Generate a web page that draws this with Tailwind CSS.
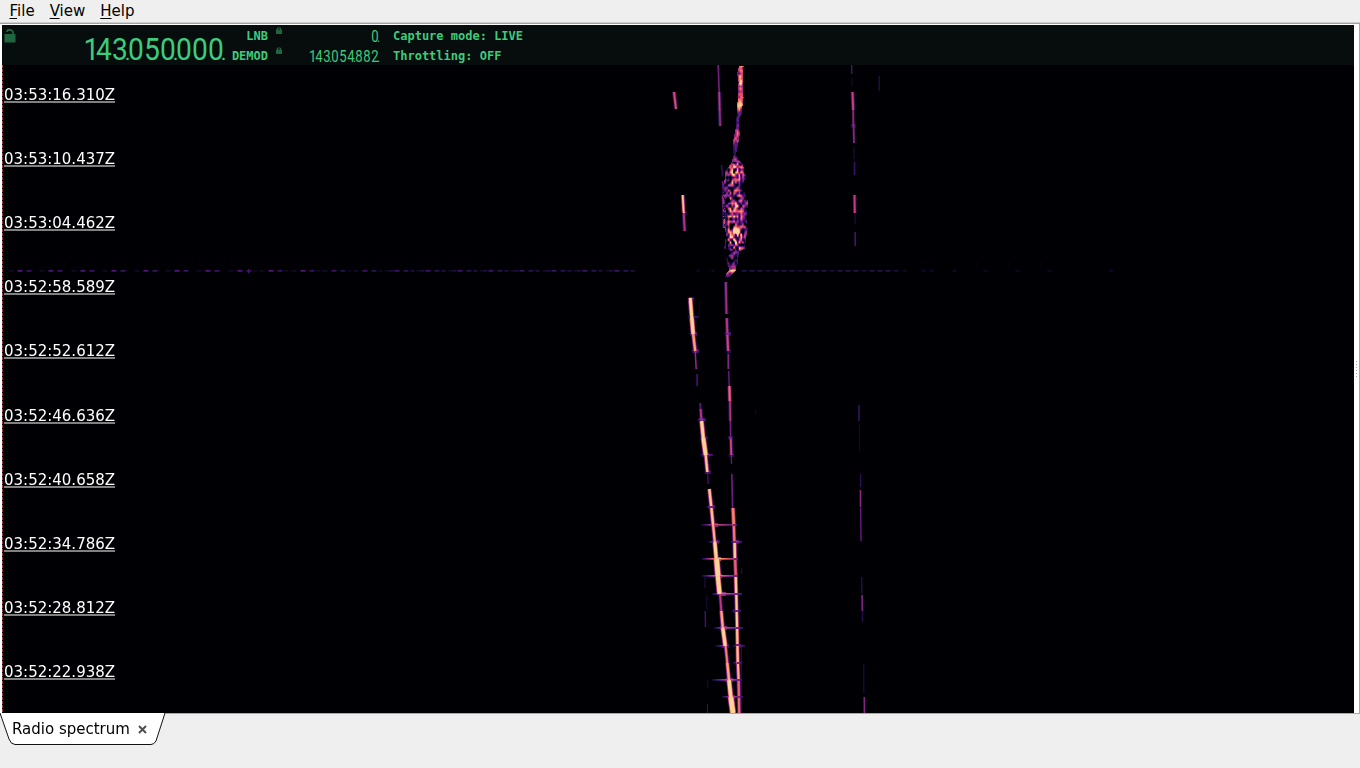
<!DOCTYPE html>
<html lang="en">
<head>
  <meta charset="UTF-8" />
  <meta name="viewport" content="width=device-width, initial-scale=1.0" />
  <title>Radio spectrum</title>
  <script src="https://cdn.jsdelivr.net/npm/@tailwindcss/browser@4"></script>
</head>
<body class="bg-[#efefef] text-black font-['DejaVu_Sans',sans-serif] h-screen overflow-hidden flex flex-col">

  <!-- Menu bar -->
  <nav class="h-[22px] shrink-0 flex items-center gap-[15px] pl-[9.500px] text-[15px] leading-[22px]">
    <a href="#"><span class="underline underline-offset-2">F</span>ile</a>
    <a href="#"><span class="underline underline-offset-2">V</span>iew</a>
    <a href="#"><span class="underline underline-offset-2">H</span>elp</a>
  </nav>

  <!-- Main panel -->
  <main class="h-[692px] shrink-0 flex bg-white border-t border-r border-b border-[#a8a8a8] border-t-[#d0d0d0]">
    <div class="w-full flex border-t border-[#a0a0a0] pt-px pl-0.5">
      <div class="w-[1352px] shrink-0 flex flex-col bg-[#000004]">

        <!-- Receiver status -->
        <header class="h-10 shrink-0 flex bg-[#060d0c] text-[#3dcb7c] font-['DejaVu_Sans_Mono',monospace]">
          <div class="w-[78px] pl-0.5 pt-1">
            <svg class="w-3 h-[14px]" viewBox="0 0 12 14" fill="#1f6640">
              <rect x="0.500" y="5" width="11" height="8.500" />
              <path d="M3 3V2.5Q3 .8 5.5 .8Q9 .8 9 4V6" fill="none" stroke="#1f6640" stroke-width="1.7" />
            </svg>
          </div>
          <div class="flex items-baseline w-[147px] pt-[9px] font-['Roboto',sans-serif] text-[32px] leading-[31px]" data-digits="143.050.000." data-cell="w-4 shrink-0 flex justify-center scale-x-[.88] first:pl-2" data-dot="w-0 shrink-0 -ml-[3px] mr-[3px] text-[20px]"></div>
          <div class="w-[42px] flex flex-col items-end pr-[1px] text-xs font-bold leading-5 pt-px">
            <span>LNB</span>
            <span>DEMOD</span>
          </div>
          <div class="w-5 pl-[7px] pt-0.5 flex flex-col gap-[13px]">
            <svg class="w-[6px] h-[7px]" viewBox="0 0 6 7"><rect y="2.500" width="6" height="4.500" fill="#1f6640" /><path d="M1.5 3V1H4.5V3" fill="none" stroke="#1f6640" /></svg>
            <svg class="w-[6px] h-[7px]" viewBox="0 0 6 7"><rect y="2.500" width="6" height="4.500" fill="#1f6640" /><path d="M1.5 3V1H4.5V3" fill="none" stroke="#1f6640" /></svg>
          </div>
          <div class="w-[90px] flex flex-col items-end font-['Roboto',sans-serif] text-[16px] leading-5 pt-[2px]">
            <div class="flex items-baseline h-5" data-digits="0." data-cell="w-2 shrink-0 flex justify-center scale-x-[.82]" data-dot="w-0 shrink-0 -ml-[2px] mr-[2px] text-xs leading-5"></div>
            <div class="flex items-baseline h-5" data-digits="143.054.882." data-cell="w-2 shrink-0 flex justify-center scale-x-[.82] first:pl-1" data-dot="w-0 shrink-0 -ml-[2px] mr-[2px] text-xs leading-5"></div>
          </div>
          <div class="pl-[14px] pt-px flex flex-col text-xs font-bold leading-5">
            <span>Capture mode: LIVE</span>
            <span>Throttling: OFF</span>
          </div>
        </header>

        <!-- Waterfall -->
        <section class="relative h-[648px]">
          <canvas id="waterfall" class="block" width="1352" height="648"></canvas>
          <div id="times" class="absolute inset-0 text-white text-[15px]"></div>
        </section>
      </div>
      <!-- Splitter handle -->
      <div class="flex-1 flex flex-col items-center justify-center gap-[2px]">
        <i class="size-px bg-[#aaa]"></i><i class="size-px bg-[#aaa]"></i><i class="size-px bg-[#aaa]"></i><i class="size-px bg-[#aaa]"></i><i class="size-px bg-[#aaa]"></i><i class="size-px bg-[#aaa]"></i>
      </div>
    </div>
  </main>

  <!-- Tab bar -->
  <footer class="relative">
    <svg class="absolute left-0 -top-px w-[168px] h-8" viewBox="0 0 168 32">
      <path d="M0 0L9 26Q11 31.500 15 31.500H151Q154 31.500 156 28L165 0Z" fill="#fff" />
      <path d="M0 0L9 26Q11 31.500 15 31.500H151Q154 31.500 156 28L165 0" fill="none" stroke="#111" />
    </svg>
    <div class="relative flex items-center h-[30px] pl-3 text-[15px]">
      <span>Radio spectrum</span>
      <svg class="ml-[8.500px] size-[9px]" viewBox="0 0 9 9"><path d="M1 1L8 8M8 1L1 8" stroke="#505050" stroke-width="2" /></svg>
    </div>
  </footer>

  <script>
    document.querySelectorAll("[data-digits]").forEach(el => {
      [...el.dataset.digits].forEach(ch => {
        const s = document.createElement("span");
        s.className = ch === "." ? el.dataset.dot : el.dataset.cell;
        s.textContent = ch;
        el.appendChild(s);
      });
    });

    // time labels, [y of the rule, text]
    const times = [
      [101, "03:53:16.310Z"], [165, "03:53:10.437Z"], [229, "03:53:04.462Z"], [293, "03:52:58.589Z"],
      [357, "03:52:52.612Z"], [422, "03:52:46.636Z"], [486, "03:52:40.658Z"], [550, "03:52:34.786Z"],
      [614, "03:52:28.812Z"], [678, "03:52:22.938Z"]
    ];
    times.forEach(([y, text]) => {
      const row = document.createElement("div");
      row.className = "absolute left-0.5 w-[111px] h-[18px] border-b-2 border-[#808080] whitespace-nowrap leading-[20px] -mt-[16px]";
      row.style.top = (y - 65) + "px";
      row.textContent = text;
      document.getElementById("times").appendChild(row);
    });

    const ctx = document.getElementById("waterfall").getContext("2d");
    ctx.translate(-2, -65);

    const ramp = [[0, 0, 4], [28, 16, 68], [79, 18, 123], [129, 37, 129], [181, 54, 122], [229, 80, 100], [251, 135, 97], [254, 194, 135], [254, 212, 150]];
    function magma(v) {
      const p = Math.max(0, Math.min(0.999, v)) * (ramp.length - 1);
      const i = Math.floor(p), f = p - i;
      return "rgb(" + ramp[i].map((c, k) => Math.round(c + (ramp[i + 1][k] - c) * f)).join() + ")";
    }
    let seed = 7;
    function rnd() {
      seed = (seed * 16807) % 2147483647;
      return seed / 2147483647;
    }

    // carriers: x1, y1, x2, y2, width, level
    const lines = [
      [673.5, 92, 675.5, 109, 2, .6], [682.2, 195, 683.2, 213, 2, .9], [683.2, 213, 684.2, 231, 2, .48],
      [717.7, 65, 718.7, 92, 1.6, .35], [718.7, 92, 719.2, 111, 1.8, .5], [719.2, 111, 719.7, 126, 1.8, .42],
      [721, 165, 722, 176, 1.5, .18], [722, 181, 723, 195, 1.5, .3], [722.5, 195, 723.5, 212, 2, .45], [723.5, 212, 724, 228, 2, .58],
      [851.2, 65, 851.2, 74, 1.3, .25], [851.5, 78, 851.5, 86, 1, .1], [852, 92, 852.7, 110, 2, .55], [852.7, 110, 852.9, 126, 2, .4],
      [853.1, 126, 853.5, 143, 2, .37], [853.5, 147, 853.5, 159, 1, .13], [854, 162, 854, 175, 1.5, .2], [854, 195, 854.3, 213, 1.8, .55],
      [854.5, 214, 854.5, 224, 1, .15], [854.7, 232, 854.7, 246, 1.5, .25], [878.7, 76, 878.7, 91, 1.5, .12],
      [689.8, 298, 691.2, 317, 3.2, 1], [691.2, 317, 692.7, 334, 3.6, 1], [692.7, 334, 694.7, 351, 2.5, .8], [694.7, 351, 695.7, 369, 1.6, .4], [696.5, 374, 696.7, 386, 1.5, .25],
      [699.8, 403, 700, 411, 2, .27], [700.2, 409, 700.8, 420, 2, .48], [701.1, 421, 702.8, 438, 3.3, 1], [702.8, 438, 705.2, 455, 4, 1], [705.2, 455, 706.8, 472, 2.5, .9], [707.2, 473, 707.7, 484, 1.3, .23],
      [725.3, 282, 726, 314, 1.8, .45], [726.3, 318, 726.8, 333, 2, .5], [726.8, 333, 727.6, 351, 2.1, .57], [727.8, 354, 727.8, 369, 1.8, .38], [728.1, 371, 728.8, 386, 1.5, .3],
      [728.9, 386, 729.3, 401, 2.2, .67], [729.5, 401, 729.8, 421, 1.7, .48], [729.8, 421, 730.1, 438, 1.5, .35], [730.3, 438, 730.8, 455, 1.8, .58], [730.8, 455, 731, 464, 1.3, .3], [731.3, 474, 732.1, 508, 1.7, .32],
      [708.8, 489, 710.8, 507, 2.6, .88], [710.8, 507, 712.5, 524, 2.6, .88], [712.5, 524, 714.3, 542, 2.3, .85], [714.3, 542, 715.8, 559, 3.3, 1], [716.1, 559, 717.5, 576, 5, 1], [717.3, 576, 719.1, 594, 4.3, 1],
      [719.5, 594, 720.8, 611, 1.9, .52], [720.8, 611, 722.3, 628, 2.5, .82], [722.3, 628, 724.8, 646, 3.5, .98], [725.1, 646, 726.8, 663, 2, .75], [726.8, 663, 728.5, 680, 2.6, .82], [728.5, 680, 730.3, 697, 3.8, 1], [730.3, 697, 732.5, 713, 5, 1],
      [732.5, 508, 733.3, 525, 2.8, .74], [733.3, 525, 733.9, 542, 2.3, .72], [734.1, 542, 734.5, 559, 2.6, .96], [734.6, 559, 735.3, 576, 2.5, .66], [735.2, 576, 735.7, 594, 2.5, .96], [735.8, 594, 736.6, 628, 2.3, .95],
      [736.6, 628, 737.3, 663, 2.4, .9], [737.4, 663, 738.1, 680, 2.4, .84], [738.1, 680, 738.8, 713, 2.4, .68],
      [858.5, 405, 858.5, 421, 1.7, .18], [859, 424, 859, 452, 1, .08], [860, 474, 860, 487, 1, .17], [859.9, 490, 860, 507, 1.5, .4], [860.1, 508, 860.5, 541, 1.4, .3],
      [861.3, 577, 861.3, 594, 1.2, .17], [861.6, 595, 861.8, 611, 1.7, .36], [862, 612, 862, 622, 1, .15], [863.3, 664, 863.3, 693, 1, .13], [863.8, 697, 863.9, 713, 1.6, .38],
      [704.5, 576, 704.5, 588, 1, .15], [706.3, 595, 706.3, 609, 1, .12], [704.7, 611, 705, 627, 1.4, .22], [707.3, 680, 707.3, 688, 1, .1], [707, 704, 707, 713, 1, .2],
      [699.2, 301, 699, 316, 1, .06], [755.2, 409, 755.2, 414, 1, .07], [741, 568, 741, 574, 1.3, .13], [740.7, 645, 740.7, 713, 1, .2]
    ];

    // keying clicks: x1, x2, y, centre, level
    const clicks = [
      [687, 694, 299, 690, .45], [687, 699, 317, 691, .32], [689, 697, 334, 693, .6], [691, 699, 351, 695, .5],
      [697, 706, 420, 701, .5], [699, 708, 438, 703, .45], [700, 713, 455, 705, .5], [704, 711, 472, 707, .45],
      [717, 722, 110, 719, .3], [682, 687, 213, 684, .35], [850, 856, 126, 853, .3], [724, 731, 334, 727, .5], [725, 731, 351, 728, .3], [727, 733, 438, 730, .35], [728, 734, 455, 731, .35],
      [706, 715, 507, 711, .5], [701, 737, 525, 714, .6], [708, 720, 542, 715, .5], [730, 742, 542, 735, .5],
      [702, 738, 559, 717, .9], [702, 738, 576, 718, .75], [712, 742, 594, 722, .65], [731, 741, 611, 736, .4],
      [714, 743, 628, 723, .6], [715, 729, 645.5, 725, .5], [732, 745, 645.5, 738, .4], [732, 742, 663, 738, .4],
      [712, 742, 680, 729, .65], [722, 743, 697, 731, .55]
    ];

    function stroke(l, width, level) {
      ctx.lineWidth = width;
      ctx.strokeStyle = magma(level);
      ctx.beginPath();
      ctx.moveTo(l[0] + .5, l[1]);
      ctx.lineTo(l[2] + .5, l[3]);
      ctx.stroke();
    }
    lines.forEach(l => { if (l[5] > .4) stroke(l, l[4] + 1.8, l[5] * .35); });
    clicks.forEach(([a, b, y, c, level]) => {
      for (let x = a; x < b; x++) {
        const d = x < c ? (c - x) / (c - a) : (x - c) / (b - c) * .75;
        const v = level * (1 - d * .85);
        ctx.fillStyle = magma(v);
        ctx.fillRect(x, Math.round(y) - 1, 1, 1);
        ctx.fillStyle = magma(v * .7);
        ctx.fillRect(x, Math.round(y), 1, 1);
        // diamond shaped flare next to the carrier
        if (Math.abs(x - c) < 4) {
          ctx.fillStyle = magma(v * .65);
          ctx.fillRect(x, Math.round(y) - 2, 1, 1);
          ctx.fillRect(x, Math.round(y) + 1, 1, 1);
        }
      }
    });
    lines.forEach(l => { if (l[5] > .6) stroke(l, l[4] + .6, l[5] * .62); });
    lines.forEach(l => stroke(l, l[5] > .6 ? l[4] - .3 : l[4], l[5]));
    // dark pits where a click crosses a carrier
    [[727, 334], [730, 438], [711, 507], [734, 525], [734, 542], [735, 559], [735, 576], [736, 594], [736, 611], [737, 628], [737, 645], [738, 663], [738, 680], [738, 697]].forEach(([x, y]) => {
      ctx.fillStyle = magma(.35);
      ctx.fillRect(x - 1, y - 1, 3, 2);
    });

    // head echo and trail: y, centre, half width, level
    const trail = [
      [66, 741, 2, .75], [73, 739.5, 2.5, .7], [82, 740.5, 2, .85], [90, 740, 2, .6], [97, 740.5, 2.5, .8], [105, 739.5, 2.5, .95], [113, 739, 2, .45],
      [119, 737, 1, .3], [126, 737, 1, .45], [133, 737, 2.500, .65], [141, 735.5, 2.5, .65], [146, 735, 2, .3], [154, 734.500, 1, .25], [160, 735, 3, .6],
      [164, 736, 6, 1], [171, 735, 10, .85], [178, 735, 10, .88], [184, 732, 9, .66], [192, 733, 11, .6], [200, 735, 12, .9], [207, 735, 12, .8], [214, 734, 12, .72], [222, 734, 12, .72],
      [228, 736, 11, .9], [235, 736, 10, 1.05], [242, 735, 10, .95], [248, 734, 10, .85], [251, 736, 2.5, .5], [256, 732, 6, .4], [263, 732, 5, .4], [268, 732, 3, .5], [270, 732, 3, .95], [273, 729, 3, .6], [277, 727, 2, .3]
    ];
    // smoothed noise on a lattice of 1.8 x 2.6 px cells
    const grid = Array.from({ length: 100 }, () => Array.from({ length: 40 }, rnd));
    function noise(x, y) {
      const gx = (x - 712) / 1.8, gy = (y - 60) / 2.6;
      const i = Math.floor(gx), j = Math.floor(gy), u = gx - i, w = gy - j;
      const top = grid[j][i] * (1 - u) + grid[j][i + 1] * u;
      const bottom = grid[j + 1][i] * (1 - u) + grid[j + 1][i + 1] * u;
      return top * (1 - w) + bottom * w;
    }
    for (let k = 0; k < trail.length - 1; k++) {
      const p = trail[k], q = trail[k + 1];
      for (let y = p[0]; y < q[0]; y++) {
        const t = (y - p[0]) / (q[0] - p[0]);
        const cx = p[1] + (q[1] - p[1]) * t, half = p[2] + (q[2] - p[2]) * t, level = p[3] + (q[3] - p[3]) * t;
        for (let x = Math.round(cx - half); x <= cx + half; x++) {
          // strongest in the core, patchy at the rim
          const edge = 1 - Math.abs(x - cx) / (half + 1) * .62;
          const n = noise(x, y);
          const v = half > 4 ? level * edge * (n - .22) * 2.1 : level * (.35 + edge * n);
          if (v < .06) continue;
          ctx.fillStyle = magma(v);
          ctx.fillRect(x, y, 1, 1);
        }
      }
    }

    // broadband pulse, fading to the right
    function dash(x, len, v) {
      ctx.fillStyle = magma(v);
      ctx.fillRect(Math.round(x), 270, len, 1);
      ctx.fillStyle = magma(v * .7);
      ctx.fillRect(Math.round(x), 271, len, 1);
      ctx.fillStyle = magma(v * .4);
      ctx.fillRect(Math.round(x) - 1, 270, 1, 2);
      ctx.fillRect(Math.round(x) + len, 270, 1, 2);
    }
    for (let x = 9; x < 625; x += 31.4) {
      const fade = x < 300 ? 1 : .8;
      dash(x, 4, .07);
      dash(x + 9, 4, .26 * fade);
      dash(x + 18, 4, .2 * fade);
      if (x > 220) dash(x + 25, 3, x > 380 ? .13 : .06);
      if (x > 380) dash(x + 3, 4, .11);
    }
    for (let x = 697; x < 722; x += 15) dash(x, 2, .08);
    for (let x = 742, n = 0; x < 900; x += 8, n++) dash(x, 4, n % 4 === 3 ? .1 : .15);
    [903, 922, 930, 953, 984, 1016, 1048, 1110].forEach(x => dash(x, 3, .07));
    ctx.fillStyle = magma(.25);
    ctx.fillRect(248, 269, 1, 4);

    // left edge of the frequency axis
    ctx.fillStyle = "#a8363c";
    for (let y = 65; y < 713; y += 4) ctx.fillRect(2, y, 1, 3);
  </script>

</body>
</html>
